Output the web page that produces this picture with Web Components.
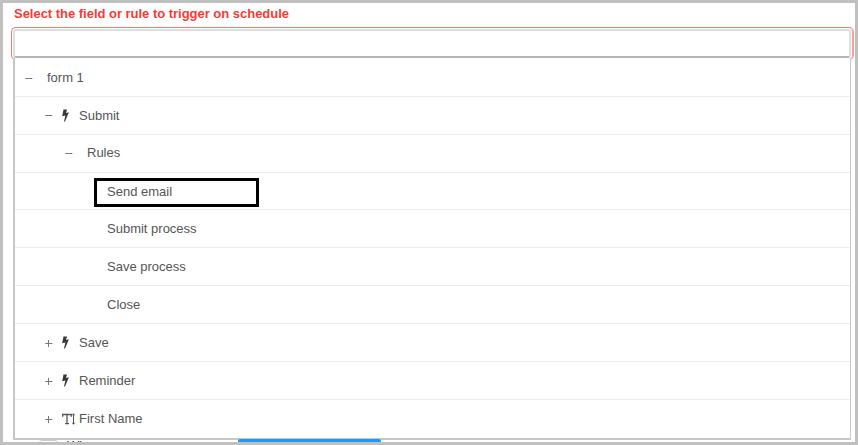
<!DOCTYPE html>
<html lang="en"><head><meta charset="utf-8"><title>Schedule trigger</title>
<style>html,body{margin:0;height:100%;overflow:hidden;background:#fff;font:13px/16px "Liberation Sans",Arial,sans-serif;color:#555}</style></head>
<body>
<trigger-form>
<span slot="label">Select the field or rule to trigger on schedule</span>
<tree-row level="0" state="open" style="--h:39px;--top:2px">form 1</tree-row>
<tree-row level="1" state="open" icon="bolt">Submit</tree-row>
<tree-row level="2" state="open" style="--bottom:1px">Rules</tree-row>
<tree-row level="3" style="--h:37px;--top:1px" marked>Send email</tree-row>
<tree-row level="3">Submit process</tree-row>
<tree-row level="3">Save process</tree-row>
<tree-row level="3">Close</tree-row>
<tree-row level="1" state="closed" icon="bolt">Save</tree-row>
<tree-row level="1" state="closed" icon="bolt">Reminder</tree-row>
<tree-row level="1" state="closed" icon="text">First Name</tree-row>
</trigger-form>
<script>
customElements.define('tree-row', class extends HTMLElement {
  connectedCallback() {
    const root = this.attachShadow({mode: 'open'});
    const level = +this.getAttribute('level'), state = this.getAttribute('state'), icon = this.getAttribute('icon');
    const toggle = state ? `<svg class="toggle" width="8" height="9" viewBox="0 0 8 9"><path d="M0.3 4.500H7.300${state === 'closed' ? 'M3.500 1V8' : ''}" stroke="#777" fill="none"/></svg>` : '';
    const icons = {
      bolt: '<svg width="7" height="13" viewBox="0 0 7 13"><path d="M1.500.5H5L4 4l2.900-.7L3 12.400H2L3.400 6.400.2 7.200z" fill="#383838"/></svg>',
      text: '<svg width="14" height="12" viewBox="0 0 14 12"><path d="M.7 3.800V1.500H9.300V3.800M5 1.500V10.500M3 10.600H7" stroke="#555" fill="none" stroke-width="1.300"/><path d="M11.500 1V11M10.300 2.300l1.200-1.600 1.200 1.600M10.300 9.700l1.200 1.600 1.200-1.600" stroke="#555" fill="none"/></svg>'
    };
    root.innerHTML = `<style>
      :host{display:flex;box-sizing:border-box;height:var(--h,38px);align-items:center;border-bottom:1px solid #e9eded;padding:var(--top,0) 0 var(--bottom,0) ${[10,30,50,92][level]}px}
      :host(:last-child){border-bottom:0}
      .toggle{flex:none;width:8px;margin-right:1px}
      :host([state=closed][icon=bolt]) .toggle{margin-top:2px}
      .icon{display:flex;width:${icon ? '17px' : '0'};margin-left:${icon ? '8px' : level ? '14px' : '13px'}}
      .level2{margin-left:13px}
      .level3{display:none}
      :host([marked]) .name{position:relative}
      :host([marked]) .name::before{content:"";position:absolute;left:-13px;top:-6px;width:159px;height:23px;border:3px solid #000}
    </style>${toggle}<span class="icon level${level}">${icon ? icons[icon] : ''}</span><span class="name"><slot></slot></span>`;
  }
});
customElements.define('trigger-form', class extends HTMLElement {
  connectedCallback() {
    this.attachShadow({mode: 'open'}).innerHTML = `<style>
      :host{display:block;box-sizing:border-box;width:858px;height:445px;border:3px solid #c0c0c0;padding:3px 0 0 8px;overflow:hidden}
      .label{font-weight:bold;color:#f43b35;height:21px;padding-left:3px;letter-spacing:-.02px}
      .field{box-sizing:border-box;width:843px;height:33px;border:1px solid #fa7770;border-right:2px solid #faa09b;border-radius:5px;padding:1px 1px 0}
      .input{box-sizing:border-box;height:29px;border:2px solid #dedede;border-bottom:2px solid #b5b5b5;border-radius:3px}
      .list{box-sizing:border-box;position:relative;margin:-2px 0 0 2px;width:838px;height:382px;border:solid #c5c8c8;border-width:0 1px 2px 2px;background:#fff}
      .behind{height:3px;display:flex;align-items:flex-start}
      .box{width:19px;height:7px;margin-left:28px;box-sizing:border-box;border:1px solid #ccc;border-radius:3px}
      .when{margin-left:9px;width:145px;line-height:12px;color:#444}
      .button{position:relative;width:143px;height:9px;margin:-1px 0 0 26px;border-radius:2px;background:#2196f3}
    </style>
    <div class="label"><slot name="label"></slot></div>
    <div class="field"><div class="input"></div></div>
    <div class="list"><slot></slot></div>
    <div class="behind"><span class="box"></span><span class="when">When</span><span class="button"></span></div>`;
  }
});
</script>
</body></html>
